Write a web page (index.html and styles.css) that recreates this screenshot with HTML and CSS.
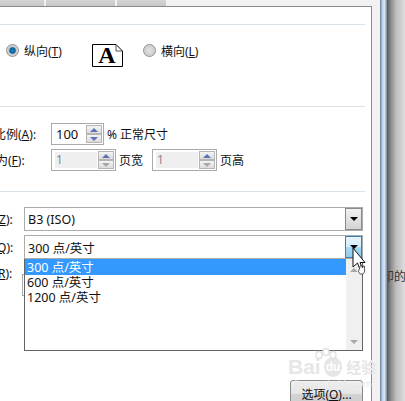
FILE: index.html
```html
<!DOCTYPE html>
<html lang="zh-CN">
<head>
    <meta charset="UTF-8">
    <meta name="viewport" content="width=device-width, initial-scale=1.0">
    <title>页面设置</title>
    <link rel="stylesheet" href="styles.css">
</head>
<body>
    <div class="screen">
        <div class="dialog">
            <div class="tabs">
                <div class="tab tab-one"><span>页边距</span></div>
                <div class="tab tab-two"><span>页眉/页脚</span></div>
                <div class="tab tab-three"><span>工作表</span></div>
            </div>
            <div class="panel">
                <hr class="rule rule-top">
                <div class="orient">
                    <span class="radio radio-on"></span>
                    <span class="orient-label">纵向(<u>T</u>)</span>
                    <svg class="page-icon" width="32" height="24" viewBox="0 0 32 24">
                        <path d="M.5.5H24L30.5 7V22.500H.5Z" fill="#fff" stroke="#000"/>
                        <path d="M24 .5V7H30.500" fill="none" stroke="#555"/>
                        <text x="15" y="19" text-anchor="middle" class="page-letter">A</text>
                    </svg>
                    <span class="radio"></span>
                    <span class="orient-label">横向(<u>L</u>)</span>
                </div>
                <hr class="rule rule-mid">
                <div class="scale-row row-ratio">
                    <span class="cut-label label-ratio">比例(<u>A</u>):</span>
                    <div class="spin spin-ratio">
                        <span class="spin-value">100</span>
                        <span class="spin-btns"><i class="up"></i><i class="down"></i></span>
                    </div>
                    <span>% 正常尺寸</span>
                </div>
                <div class="scale-row row-fit">
                    <span class="cut-label label-fit">为(<u>F</u>):</span>
                    <div class="spin spin-off">
                        <span class="spin-value">1</span>
                        <span class="spin-btns"><i class="up"></i><i class="down"></i></span>
                    </div>
                    <span>页宽</span>
                    <div class="spin spin-off spin-last">
                        <span class="spin-value">1</span>
                        <span class="spin-btns"><i class="up"></i><i class="down"></i></span>
                    </div>
                    <span>页高</span>
                </div>
                <hr class="rule rule-low">
                <div class="combo-row combo-paper">
                    <span class="combo-label"><u>Z</u>):</span>
                    <div class="combo">
                        <span class="combo-value">B3 (ISO)</span>
                        <span class="combo-btn"><i></i></span>
                    </div>
                </div>
                <div class="combo-row combo-quality">
                    <span class="combo-label label-q"><u>Q</u>):</span>
                    <div class="combo">
                        <span class="combo-value">300 点/英寸</span>
                        <span class="combo-btn combo-btn-hot"><i></i></span>
                    </div>
                </div>
                <div class="list-wrap">
                    <span class="combo-label label-r"><u>R</u>):</span>
                    <div class="under-field"></div>
                    <div class="list">
                        <div class="list-items">
                            <div class="item item-on">300 点/英寸</div>
                            <div class="item">600 点/英寸</div>
                            <div class="item">1200 点/英寸</div>
                        </div>
                        <div class="list-bar">
                            <i class="bar-up"></i>
                            <i class="bar-down"></i>
                        </div>
                    </div>
                </div>
                <div class="actions">
                    <button class="btn">选项(<u>O</u>)...</button>
                </div>
            </div>
        </div>
        <div class="frame"></div>
        <div class="backdrop"><span class="back-text">印的</span></div>

        <svg class="cursor" width="14" height="28" viewBox="0 0 14 28">
            <path d="M1 1V20L5.500 16 8 22.500 10.500 21.500 8 15.500H13Z" fill="#fff" stroke="#111" stroke-width="1"/>
            <path d="M8.500 18.500h1.500v2h1v-1.500h1.500V25l-1.500 2H8L6.500 24.500Z" fill="#fff" stroke="#333" stroke-width=".8"/>
        </svg>

        <div class="watermark">
            <svg class="paw" width="26" height="12" viewBox="0 0 26 12">
                <g fill="#fff" stroke="#e2e2e2" stroke-width="1.500">
                    <ellipse cx="6" cy="7" rx="3" ry="3.500"/>
                    <ellipse cx="13" cy="4" rx="3" ry="3.500"/>
                    <ellipse cx="20" cy="7" rx="3" ry="3.500"/>
                </g>
            </svg>
            <div class="mark-main"><span>Bai</span><span class="mark-du">du</span><span class="mark-cn">经验</span></div>
            <div class="mark-sub">jingyan.baidu.com</div>
        </div>
    </div>
</body>
</html>
```

FILE: styles.css
```css
* {
    margin: 0;
    padding: 0;
    box-sizing: border-box;
}
body {
    margin: 0;
    overflow: hidden;
    background: #fff;
    font-family: "Noto Sans", "Noto Sans CJK SC", sans-serif;
    font-size: 12px;
    color: #111;
}
.screen {
    position: relative;
    display: flex;
    width: 405px;
    height: 401px;
    overflow: hidden;
}
.dialog {
    width: 380px;
    height: 401px;
    background: #f2f2f2;
    display: flex;
    flex-direction: column;
}
.frame {
    width: 7px;
    background: linear-gradient(to right, #7d8ea3 0, #7d8ea3 1px, #b9d1ec 2px, #dbe8f7 5px, #8b99aa 6px);
}
.backdrop {
    flex: 1;
    overflow: hidden;
    background: linear-gradient(to right, #5a5a5a 0, #8c8c8c 4px, #bdbdbd 9px, #dedede 18px);
    padding-top: 267px;
}
.back-text {
    display: block;
    margin-left: -5px;
    font-size: 12px;
    color: #333;
    white-space: nowrap;
}

/* tabs, only the bottom of them is in the picture */
.tabs {
    height: 6px;
    display: flex;
    gap: 2px;
    overflow: hidden;
    flex: none;
}
.tab {
    height: 6px;
    background: linear-gradient(#d4d4d4, #c8c8c8);
    font-size: 12px;
    text-align: center;
    overflow: hidden;
}
.tab span {
    display: block;
    margin-top: -15px;
    line-height: 18px;
}
.tab-one { width: 44px; }
.tab-one span { padding-left: 6px; }
.tab-two { width: 69px; }
.tab-three { width: 49px; }

.panel {
    flex: 1;
    width: 372px;
    background: #fff;
    border-top: 1px solid #898c95;
    border-right: 1px solid #898c95;
}
.rule {
    border: 0;
    height: 1px;
    background: #d9e2e8;
    width: 365px;
}
.rule-top { margin-top: 17px; }
.rule-mid { margin-top: 23px; }
.rule-low { margin-top: 21px; }

.orient {
    height: 58px;
    display: flex;
    align-items: flex-start;
    padding: 19px 0 0 6px;
}
.orient-label {
    margin-left: 5px;
    margin-top: -2px;
    font-size: 12px;
}
.radio {
    width: 13px;
    height: 13px;
    border-radius: 50%;
    border: 1px solid #8f8f8f;
    background: radial-gradient(circle, #e4e4e4 0, #cfcfcf 60%, #e9e9e9 100%);
}
.radio-on {
    background: radial-gradient(circle, #0e8ccf 0, #0f5e98 35%, #c9c9c9 50%, #e6e6e6 100%);
}
.page-icon {
    margin-left: 30px;
    margin-right: 19px;
}
.page-letter {
    font-family: "Liberation Serif", serif;
    font-size: 24px;
    font-weight: 700;
    fill: #000;
}

.scale-row {
    display: flex;
    align-items: center;
    height: 21px;
    white-space: nowrap;
}
.row-ratio { margin-top: 16px; }
.row-fit { margin-top: 5px; }
.cut-label { display: block; overflow: hidden; }
.label-ratio { width: 51px; text-indent: -6px; }
.label-fit { width: 51px; text-indent: -4px; }
.spin {
    height: 22px;
    border: 1px solid #ababab;
    display: flex;
    align-items: center;
    justify-content: space-between;
    padding: 0 1px 0 4px;
    width: 53px;
    margin-right: 3px;
    background: #fff;
    font-size: 13px;
}
.spin-off {
    width: 65px;
    background: #fff;
    color: #8a8a8a;
    padding-left: 3px;
    font-size: 12px;
}
.spin-off .spin-value {
    flex: 1;
    background: #efefef;
    height: 16px;
    line-height: 16px;
    margin-right: 1px;
    padding-left: 1px;
}
.spin-last { margin-left: 9px; }
.spin-btns {
    width: 16px;
    height: 18px;
    display: flex;
    flex-direction: column;
}
.spin-btns i {
    flex: 1;
    border: 1px solid #b5b5b5;
    background: linear-gradient(#f4f4f4, #dcdcdc);
    position: relative;
}
.spin-btns i::after {
    content: "";
    position: absolute;
    left: 3px;
    top: 2px;
    border-left: 4px solid transparent;
    border-right: 4px solid transparent;
}
.spin-btns .up::after { border-bottom: 4px solid #5f73b0; }
.spin-btns .down::after { border-top: 4px solid #5f73b0; }
.spin-off .down::after { border-top-color: #a8a8a8; }

.combo-row {
    display: flex;
    align-items: center;
    height: 24px;
    white-space: nowrap;
}
.combo-paper { margin-top: 15px; }
.combo-quality { margin-top: 4px; }
.combo-label {
    display: block;
    width: 24px;
    overflow: hidden;
    text-indent: -1px;
}
.label-q { text-indent: -3px; }
.combo {
    width: 339px;
    height: 24px;
    border: 1px solid #ababab;
    display: flex;
    align-items: center;
    justify-content: space-between;
    padding-left: 3px;
    background: #fff;
}
.combo-value {
    font-size: 12.5px;
    margin-top: 1px;
}
.combo-btn {
    width: 17px;
    height: 22px;
    background: linear-gradient(#f2f2f2, #d4d4d4);
    border: 1px solid #8a8a8a;
    display: flex;
    align-items: center;
    justify-content: center;
}
.combo-btn i {
    border-left: 4px solid transparent;
    border-right: 4px solid transparent;
    border-top: 4px solid #000;
}
.combo-btn-hot {
    border-color: #3c7fb1;
    background: linear-gradient(#e4f4fc 0, #d6eefa 50%, #a9dbf5 50%, #8fcbea 100%);
}

.list-wrap {
    position: relative;
    display: flex;
    height: 92px;
}
.label-r {
    margin-top: 6px;
    height: 18px;
    text-indent: -2px;
}
.under-field {
    position: absolute;
    left: 22px;
    top: 15px;
    width: 3px;
    height: 22px;
    border: 1px solid #ababab;
    border-right: 0;
}
.list {
    position: relative;
    width: 339px;
    height: 92px;
    border: 1px solid #646464;
    border-top: 0;
    background: #fff;
    display: flex;
}
.list-items { flex: 1; }
.item {
    height: 15px;
    line-height: 16px;
    padding-left: 2px;
    font-size: 12.5px;
    white-space: nowrap;
}
.item-on {
    height: 16px;
    line-height: 17px;
    background: #3399ff;
    color: #fff;
    outline: 1px dotted #c97a1e;
    outline-offset: -1px;
}
.list-bar {
    width: 16px;
    background: #f0f0f0;
    display: flex;
    flex-direction: column;
    justify-content: space-between;
    align-items: center;
    padding: 9px 0 6px;
}
.list-bar i {
    border-left: 4px solid transparent;
    border-right: 4px solid transparent;
}
.bar-up { border-bottom: 4px solid #a9a9a9; }
.bar-down { border-top: 4px solid #a9a9a9; }

.actions {
    display: flex;
    justify-content: flex-end;
    padding: 29px 8px 0 0;
}
.btn {
    flex: none;
    width: 73px;
    height: 28px;
    border: 1px solid #8a8a8a;
    border-radius: 3px;
    background: linear-gradient(#f2f2f2, #e4e4e4 50%, #d2d2d2 50%, #cfcfcf);
    font: inherit;
    color: #111;
}

/* mouse pointer and watermark lie over the dialog */
.cursor {
    position: absolute;
    left: 352px;
    top: 247px;
}
.watermark {
    position: absolute;
    left: 288px;
    top: 348px;
    width: 90px;
    color: #e6e6e6;
}
.paw {
    position: absolute;
    left: 25px;
    top: 0;
}
.mark-main {
    margin-top: 9px;
    display: flex;
    align-items: center;
    font-family: "Liberation Sans", sans-serif;
    font-size: 21px;
    font-weight: 700;
    line-height: 20px;
    height: 20px;
}
.mark-du {
    background: #e6e6e6;
    color: #fff;
    border-radius: 50%;
    font-size: 12px;
    margin-left: 3px;
    padding: 0 2px;
}
.mark-cn {
    margin-left: 4px;
    font-family: "Noto Sans CJK SC", sans-serif;
    font-size: 15px;
}
.mark-sub {
    font-size: 9px;
    line-height: 9px;
    margin-top: 2px;
    text-align: center;
}
```
